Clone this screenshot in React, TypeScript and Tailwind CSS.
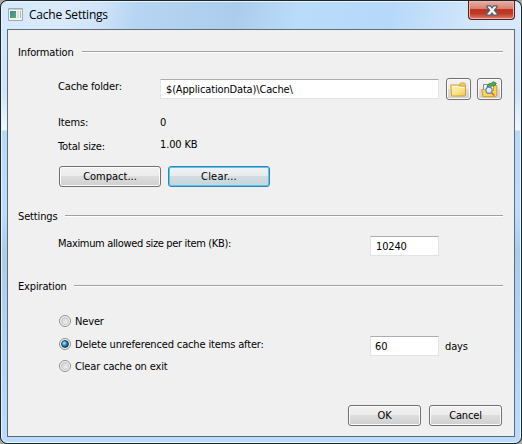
import type { ReactNode } from 'react';

function Section({ title, line }: { title: string; line: string }) {
  return (
    <div className="flex h-5 items-center pl-[10px]">
      <span className={`pt-[2px] ${line}`}>{title}</span>
      <div className="mr-[11px] h-[2px] flex-1 border-t border-[#a0a0a0] bg-white" />
    </div>
  );
}

function Button({ children, className = '', focused = false }: { children: ReactNode; className?: string; focused?: boolean }) {
  const look = focused
    ? 'border-[#3c7fb1] bg-[linear-gradient(#f0f3f5,#e6ebee_48%,#d2dce2_50%,#c8d4d9)] shadow-[inset_0_0_0_1px_#48cbf4]'
    : 'border-[#707070] bg-[linear-gradient(#f2f2f2,#ebebeb_48%,#dddddd_50%,#cfcfcf)] shadow-[inset_0_0_0_1px_#fcfcfc]';
  return (
    <button className={`flex shrink-0 items-center justify-center rounded-[3px] border ${look} ${className}`}>
      {children}
    </button>
  );
}

function Field({ value, className }: { value: string; className: string }) {
  return (
    <input
      defaultValue={value}
      className={`h-5 rounded-[1px] border border-[#e2e3ea] border-t-[#abadb3] bg-white outline-none ${className}`}
    />
  );
}

function Radio({ label, checked = false, className = '' }: { label: string; checked?: boolean; className?: string }) {
  return (
    <label className={`flex h-[22px] items-center gap-1 ${className}`}>
      <span className="flex size-3 items-center justify-center rounded-full border border-[#8e8f8f] bg-[#f4f4f4]">
        <span
          className={`size-2 rounded-full ${
            checked
              ? 'border border-[#193b55] bg-[radial-gradient(circle_at_35%_35%,#b9efff,#2e9cc9_40%,#0b496d_75%)]'
              : 'border border-[#c4c7ca] bg-linear-to-br from-[#cbcfd5] to-[#f6f6f6]'
          }`}
        />
      </span>
      <span className="pt-[2px]">{label}</span>
    </label>
  );
}

function FolderIcon() {
  return (
    <svg width="17" height="15" viewBox="0 0 17 15" className="shrink-0">
      <defs>
        <linearGradient id="folder" x1="0" y1="0" x2="1" y2="1">
          <stop stopColor="#fff4af" />
          <stop offset=".6" stopColor="#f8e28b" />
          <stop offset="1" stopColor="#edc450" />
        </linearGradient>
      </defs>
      <path d="M9 3.5 10.5 1h4l1 1.5v9H9z" fill="#f3d06a" stroke="#dca63a" />
      <path d="M.7 3h7.8l1 1h6v9.2l-.7.8H1.7z" fill="url(#folder)" stroke="#d79f34" />
      <path d="M2 4.5h6l1 1h5" stroke="#fffbe0" fill="none" />
    </svg>
  );
}

function BrowseIcon() {
  return (
    <svg width="17" height="17" viewBox="0 0 17 17" className="shrink-0">
      <path d="M2.5 10V3.5h10V10" fill="#f5f6f7" stroke="#858b91" />
      <path d="M.8 8.5h3l1 1h7.7V4.5H15.8V14l-1 1.7H2z" fill="#f8d458" stroke="#d59d27" />
      <path d="M6 5.5 7.5 3l3-.8L12 .7l3.3 1.5-1.6 2.5-3 .3-1.7 1.6z" fill="#57a957" stroke="#347c3c" strokeWidth=".9" />
      <circle cx="8" cy="9.2" r="3.1" fill="#dcecff" stroke="#6283b6" strokeWidth="1.2" />
      <path d="m10.4 11.6 3 3" stroke="#d9733c" strokeWidth="1.8" />
      <path d="M6.5 8.7 8 7.4" stroke="#fff" />
    </svg>
  );
}

function AppIcon() {
  return (
    <svg width="15" height="13" viewBox="0 0 15 13">
      <defs>
        <linearGradient id="screen" x1="0" y1="0" x2="1" y2="1">
          <stop stopColor="#427da2" />
          <stop offset="1" stopColor="#56b46a" />
        </linearGradient>
      </defs>
      <path d="M.5.5h14v12H.5z" fill="#f2f3f3" stroke="#a3a9ae" />
      <path d="M1 1h13v1H1z" fill="#c7cdd2" />
      <path d="M2 3h6v7H2z" fill="url(#screen)" />
      <path d="M9 3h2v7H9z" fill="#dde0df" />
      <path d="M12 3h1v7h-1z" fill="#9fc5a7" />
    </svg>
  );
}

export default function App() {
  return (
    <div className="h-[444px] w-[522px] overflow-hidden bg-[#a9a5a2] font-['DejaVu_Sans_Condensed','DejaVu_Sans',sans-serif] text-[11px] leading-4 tracking-[-0.15px] text-black [font-stretch:condensed]">
      <div className="flex h-full flex-col rounded-[7px] border border-[#20242b] bg-[#20242b]">
        <div className="flex min-h-0 flex-1 flex-col rounded-[6px] border border-[#e6f6ff] bg-[linear-gradient(180deg,#d5e8fb_0px,#cde4fa_90px,#f0f7fe_128px,#b8d8fa_129px,#bddcff_210px,#abcce9_250px,#bcdcff_100%)] px-[5px] pb-[5px]">
          <header className="-mx-[5px] flex h-[27px] shrink-0 items-start rounded-t-[5px] bg-[linear-gradient(100deg,#d5e9fd_0%,#d9eafc_12%,#d0e4f9_19%,#b6d5f2_26%,#abcdeb_45%,#badcfb_57%,#b7d9f9_75%,#d7e9fa_94%)] pl-[6px]">
            <div className="mt-[6px]"><AppIcon /></div>
            <h1 className="ml-[6px] mt-[5px] font-['Open_Sans',sans-serif] text-[12px] tracking-[-0.2px] [font-stretch:normal]">Cache Settings</h1>
            <button aria-label="Close" className="-mt-px ml-auto mr-[5px] flex h-[19px] w-[47px] items-center justify-center rounded-b-[4px] border border-t-0 border-[#561b20] bg-[linear-gradient(#e4b0a6_0%,#d88271_42%,#bd3322_45%,#bd3a28_70%,#d9816e_100%)] shadow-[inset_0_0_0_1px_#efb5a8]">
              <svg width="12" height="11" viewBox="0 0 12 11">
                <path d="M1 .8h3.5L6 3 7.5.8H11v1.4L8.3 5.3l2.9 3.2v1.7H7.5L6 8l-1.5 2.2H.8V8.5l2.9-3.2L1 2.2z" fill="#f6f6f7" stroke="#555c70" strokeWidth="1.2" />
              </svg>
            </button>
          </header>
          <main className="flex min-h-0 flex-1 flex-col border border-[#5e6c78] bg-[#f0f0f0] pt-[12px]">
            <Section title="Information" line="w-[64px]" />
            <div className="mt-[16px] flex h-[22px] items-start pl-[50px]">
              <span className="w-[102px] pt-px">Cache folder:</span>
              <Field value="$(ApplicationData)\Cache\" className="mt-px w-[279px] pl-[5px]" />
              <Button className="ml-[7px] h-[22px] w-[25px]"><FolderIcon /></Button>
              <Button className="ml-[6px] h-[22px] w-[25px]"><BrowseIcon /></Button>
            </div>
            <div className="mt-[15px] flex pl-[50px]"><span className="w-[102px]">Items:</span><span>0</span></div>
            <div className="mt-[8px] flex pl-[50px]"><span className="w-[102px]">Total size:</span><span className="-mt-[2px]">1.00 KB</span></div>
            <div className="mt-[11px] flex gap-[7px] pl-[51px]">
              <Button className="h-[21px] w-[102px] pt-px tracking-normal">Compact...</Button>
              <Button className="h-[21px] w-[102px] pt-px tracking-[0.2px]" focused>Clear...</Button>
            </div>
            <div className="mt-[19px]"><Section title="Settings" line="w-[47px]" /></div>
            <div className="mt-[10px] flex h-5 pl-[50px]">
              <span className="w-[312px] tracking-[-0.34px]">Maximum allowed size per item (KB):</span>
              <Field value="10240" className="w-[69px] pl-[5px] pt-px" />
            </div>
            <div className="mt-[20px]"><Section title="Expiration" line="w-[56px]" /></div>
            <div className="mt-[14px] flex pl-[51px]">
              <div className="w-[311px]">
                <Radio label="Never" />
                <Radio label="Delete unreferenced cache items after:" checked className="mt-px" />
                <Radio label="Clear cache on exit" />
              </div>
              <Field value="60" className="mt-[26px] w-[69px] pl-[4px]" />
              <span className="ml-[6px] mt-[29px]">days</span>
            </div>
            <div className="mb-[10px] mr-[12px] mt-auto flex justify-end gap-2">
              <Button className="h-[21px] w-[73px] pt-px">OK</Button>
              <Button className="h-[21px] w-[73px] pt-px">Cancel</Button>
            </div>
          </main>
        </div>
      </div>
    </div>
  );
}
